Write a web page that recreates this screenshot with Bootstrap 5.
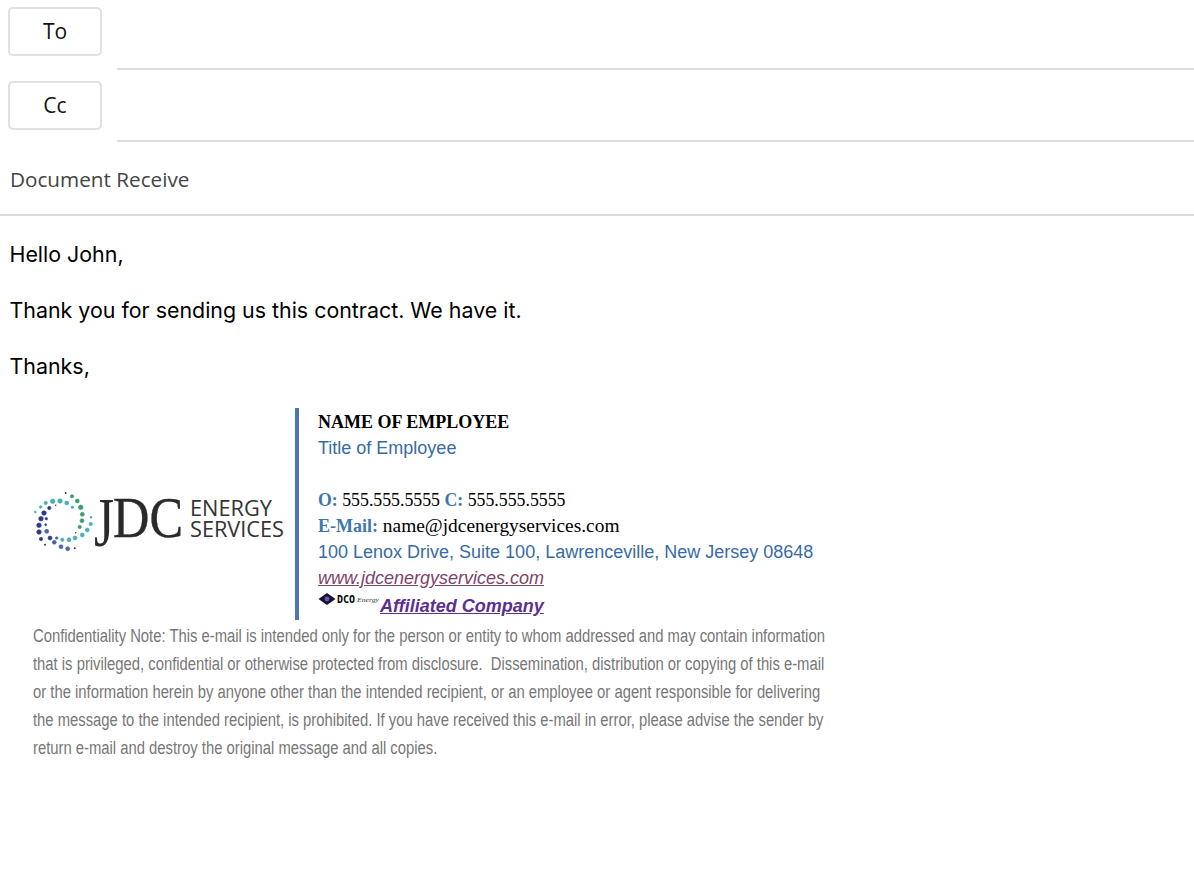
<!DOCTYPE html>
<html lang="en">
<head>
    <meta charset="UTF-8">
    <meta name="viewport" content="width=device-width, initial-scale=1.0">
    <title>Document Receive</title>
    <link href="https://cdn.jsdelivr.net/npm/bootstrap@5.3.0/dist/css/bootstrap.min.css" rel="stylesheet">
    <style>
        body {
            background-color: #fff;
            font-family: "Open Sans", sans-serif;
        }
        .addr-row {
            height: 74px;
            padding-left: 8px;
        }
        .addr-row-cc {
            height: 72px;
        }
        .addr-btn {
            width: 94px;
            height: 49px;
            margin-top: 7px;
            padding: 0;
            font-size: 21px;
            font-weight: 500;
            color: #111;
            background: #fff;
            border: 2px solid #e1e1e1;
            border-radius: 5px;
        }
        .addr-line {
            margin-left: 15px;
            height: 70px;
            border-bottom: 2px solid #dcdcdc;
        }
        .addr-line-cc {
            height: 68px;
        }
        .subject-line {
            height: 70px;
            padding: 18px 0 0 10px;
            font-size: 20.7px;
            line-height: 30px;
            color: #444;
            border-bottom: 2px solid #dcdcdc;
        }
        .msg-body {
            padding: 23px 0 0 9.5px;
            font-family: Inter, sans-serif;
            font-size: 21.4px;
            line-height: 30px;
            color: #000;
        }
        .msg-body p {
            margin-bottom: 26px;
        }
        .sig-wrap {
            margin-top: 27px;
            padding-left: 20px;
        }
        .sig-logo {
            width: 275px;
            padding-top: 12px;
        }
        .sig-logo circle {
            stroke-width: .6;
        }
        .sig-text {
            border-left: 4px solid #4a78ad;
            padding-left: 19px;
            height: 212px;
            padding-top: 1px;
            font-family: "Liberation Sans", sans-serif;
            font-size: 18px;
            line-height: 26px;
            color: #376ba5;
            white-space: nowrap;
        }
        .sig-phone {
            font-family: "Liberation Serif", serif;
            font-size: 17.8px;
            color: #000;
        }
        .sig-mail {
            font-family: "Liberation Serif", serif;
            font-size: 19.4px;
            color: #000;
        }
        .sig-mail b {
            font-size: 18px;
        }
        .sig-phone b, .sig-mail b {
            color: #3d77ad;
        }
        .sig-name {
            font-family: "Liberation Serif", serif;
            font-size: 18px;
            font-weight: bold;
            color: #000;
        }
        .sig-site {
            font-style: italic;
            color: #7d4468;
            text-decoration: underline;
        }
        .sig-aff-row {
            margin-top: 2px;
        }
        .sig-aff {
            font-style: italic;
            font-weight: bold;
            color: #5b2f91;
            text-decoration: underline;
        }
        .conf-note {
            width: 965px;
            margin: 2px 0 0 33px;
            font-family: "Liberation Sans", sans-serif;
            font-size: 18px;
            line-height: 28px;
            color: #777;
            transform: scaleX(.823);
            transform-origin: left top;
        }
    </style>
</head>
<body>
<div class="d-flex addr-row">
    <button type="button" class="btn addr-btn">To</button>
    <div class="flex-grow-1 addr-line"></div>
</div>
<div class="d-flex addr-row addr-row-cc">
    <button type="button" class="btn addr-btn">Cc</button>
    <div class="flex-grow-1 addr-line addr-line-cc"></div>
</div>
<div class="subject-line">Document Receive</div>

<div class="msg-body">
    <p>Hello John,</p>
    <p>Thank you for sending us this contract. We have it.</p>
    <p class="mb-0">Thanks,</p>
</div>

<div class="d-flex sig-wrap">
    <div class="sig-logo d-flex align-items-center">
        <svg width="275" height="80" viewBox="0 0 275 80">
            <!-- green arc -->
            <g fill="#3f9a72" stroke="#3f9a72">
                <circle cx="52" cy="16.3" r="1.7"/><circle cx="57.3" cy="21" r="2"/><circle cx="60.7" cy="27.3" r="2.3"/><circle cx="62.3" cy="34.3" r="2"/><circle cx="62" cy="40.7" r="2"/><circle cx="59.7" cy="47" r="1.7"/>
            </g>
            <!-- teal -->
            <g fill="#45b0b4" stroke="#45b0b4">
                <circle cx="71" cy="37.3" r="1"/><circle cx="70.7" cy="44" r="1.7"/><circle cx="67.3" cy="50" r="2"/><circle cx="62.3" cy="55" r="2"/><circle cx="55" cy="58" r="2"/><circle cx="49" cy="59.7" r="2"/><circle cx="42.3" cy="59.7" r="1.7"/>
                <circle cx="52.3" cy="27.3" r="1.3"/><circle cx="46.7" cy="23" r="2"/><circle cx="40" cy="21" r="2.3"/><circle cx="32.7" cy="21.3" r="2.3"/><circle cx="25.7" cy="23" r="1.7"/><circle cx="20.7" cy="27" r="1.3"/><circle cx="15.3" cy="32" r="1"/>
            </g>
            <!-- navy -->
            <g fill="#2c3a8a" stroke="#2c3a8a">
                <circle cx="29.3" cy="28" r="1.7"/><circle cx="24" cy="33" r="2.3"/><circle cx="21" cy="38.7" r="2.3"/><circle cx="26.3" cy="38.7" r="1.3"/><circle cx="19" cy="45.3" r="2.3"/><circle cx="25.7" cy="44.7" r="1"/><circle cx="19" cy="52" r="2.3"/><circle cx="21" cy="59" r="1.7"/><circle cx="30" cy="58" r="2"/>
            </g>
            <g fill="#4b63a8" stroke="#4b63a8">
                <circle cx="36.7" cy="58" r="1.3"/><circle cx="26.7" cy="51.3" r="2"/><circle cx="34.3" cy="62.3" r="2"/><circle cx="41" cy="66.7" r="2"/><circle cx="47.7" cy="68.7" r="2"/>
            </g>
            <!-- small dark specks -->
            <g fill="#24424f">
                <circle cx="45.7" cy="13" r="1"/><circle cx="55.7" cy="52.7" r=".8"/><circle cx="35.7" cy="25.3" r=".8"/><circle cx="54.7" cy="68.3" r="1"/><circle cx="25" cy="64.7" r="1"/>
            </g>
            <text x="74" y="66" font-family="Liberation Serif, serif" font-size="70" fill="#2a2a2a" textLength="20" lengthAdjust="spacingAndGlyphs">J</text>
            <text x="93" y="57" font-family="Liberation Serif, serif" font-size="56" fill="#2a2a2a" stroke="#2a2a2a" stroke-width=".4" textLength="70" lengthAdjust="spacingAndGlyphs">DC</text>
            <text x="170" y="36" font-family="Open Sans, sans-serif" font-size="21" fill="#333" textLength="82" lengthAdjust="spacingAndGlyphs">ENERGY</text>
            <text x="170" y="57" font-family="Open Sans, sans-serif" font-size="21" fill="#333" textLength="94" lengthAdjust="spacingAndGlyphs">SERVICES</text>
        </svg>
    </div>
    <div class="sig-text">
        <div class="sig-name">NAME OF EMPLOYEE</div>
        <div>Title of Employee</div>
        <div>&nbsp;</div>
        <div class="sig-phone"><b>O:</b> 555.555.5555 <b>C:</b> 555.555.5555</div>
        <div class="sig-mail"><b>E-Mail:</b> name@jdcenergyservices.com</div>
        <div>100 Lenox Drive, Suite 100, Lawrenceville, New Jersey 08648</div>
        <div class="sig-site">www.jdcenergyservices.com</div>
        <div class="d-flex align-items-start sig-aff-row">
            <svg width="62" height="20" viewBox="0 0 62 20">
                <path d="M9 0 17.5 6 9 12 0.5 6Z" fill="#16123a"/>
                <circle cx="9" cy="6" r="2.4" fill="#6a5aa8"/>
                <text x="19" y="10" font-family="DejaVu Sans Mono, monospace" font-weight="bold" font-size="10" fill="#000" textLength="18" lengthAdjust="spacingAndGlyphs">DCO</text>
                <text x="39" y="9" font-family="Liberation Serif, serif" font-style="italic" font-size="7" fill="#333" textLength="22" lengthAdjust="spacingAndGlyphs">Energy</text>
            </svg>
            <span class="sig-aff">Affiliated Company</span>
        </div>
    </div>
</div>
<div class="conf-note">Confidentiality Note: This e-mail is intended only for the person or entity to whom addressed and may contain information that is privileged, confidential or otherwise protected from disclosure.&nbsp; Dissemination, distribution or copying of this e-mail or the information herein by anyone other than the intended recipient, or an employee or agent responsible for delivering the message to the intended recipient, is prohibited. If you have received this e-mail in error, please advise the sender by return e-mail and destroy the original message and all copies.</div>

<script src="https://cdn.jsdelivr.net/npm/bootstrap@5.3.0/dist/js/bootstrap.bundle.min.js"></script>
</body>
</html>
